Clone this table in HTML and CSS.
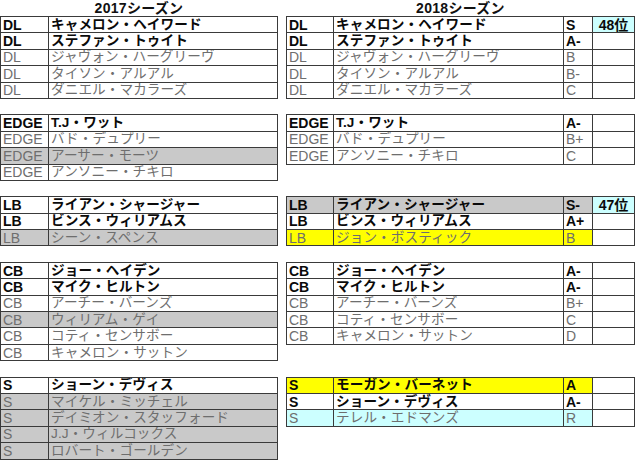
FILE: index.html
```html
<!DOCTYPE html>
<html lang="ja">
<head>
<meta charset="utf-8">
<title>2017 / 2018 シーズン</title>
<link rel="stylesheet" href="styles.css">
</head>
<body>
<div class="sheet">
  <div class="heads">
    <div class="head head-left">2017シーズン</div>
    <div class="head head-right">2018シーズン</div>
  </div>

  <div class="group">
    <table class="tbl left">
      <colgroup><col class="c-pos"><col class="c-name"></colgroup>
      <tr class="b"><td>DL</td><td>キャメロン・ヘイワード</td></tr>
      <tr class="b"><td>DL</td><td>ステファン・トゥイト</td></tr>
      <tr><td>DL</td><td>ジャヴォン・ハーグリーヴ</td></tr>
      <tr><td>DL</td><td>タイソン・アルアル</td></tr>
      <tr><td>DL</td><td>ダニエル・マカラーズ</td></tr>
    </table>
    <table class="tbl right">
      <colgroup><col class="r-pos"><col class="r-name"><col class="r-grade"><col class="r-rank"></colgroup>
      <tr class="b"><td>DL</td><td>キャメロン・ヘイワード</td><td>S</td><td class="rank">48位</td></tr>
      <tr class="b"><td>DL</td><td>ステファン・トゥイト</td><td>A-</td><td></td></tr>
      <tr><td>DL</td><td>ジャヴォン・ハーグリーヴ</td><td>B</td><td></td></tr>
      <tr><td>DL</td><td>タイソン・アルアル</td><td>B-</td><td></td></tr>
      <tr><td>DL</td><td>ダニエル・マカラーズ</td><td>C</td><td></td></tr>
    </table>
  </div>

  <div class="group">
    <table class="tbl left">
      <colgroup><col class="c-pos"><col class="c-name"></colgroup>
      <tr class="b"><td>EDGE</td><td>T.J・ワット</td></tr>
      <tr><td>EDGE</td><td>バド・デュプリー</td></tr>
      <tr class="gray"><td>EDGE</td><td>アーサー・モーツ</td></tr>
      <tr><td>EDGE</td><td>アンソニー・チキロ</td></tr>
    </table>
    <table class="tbl right">
      <colgroup><col class="r-pos"><col class="r-name"><col class="r-grade"><col class="r-rank"></colgroup>
      <tr class="b"><td>EDGE</td><td>T.J・ワット</td><td>A-</td><td></td></tr>
      <tr><td>EDGE</td><td>バド・デュプリー</td><td>B+</td><td></td></tr>
      <tr><td>EDGE</td><td>アンソニー・チキロ</td><td>C</td><td></td></tr>
    </table>
  </div>

  <div class="group">
    <table class="tbl left">
      <colgroup><col class="c-pos"><col class="c-name"></colgroup>
      <tr class="b"><td>LB</td><td>ライアン・シャージャー</td></tr>
      <tr class="b"><td>LB</td><td>ビンス・ウィリアムス</td></tr>
      <tr class="gray"><td>LB</td><td>シーン・スペンス</td></tr>
    </table>
    <table class="tbl right">
      <colgroup><col class="r-pos"><col class="r-name"><col class="r-grade"><col class="r-rank"></colgroup>
      <tr class="b"><td class="fill-gray">LB</td><td class="fill-gray">ライアン・シャージャー</td><td class="fill-gray">S-</td><td class="rank">47位</td></tr>
      <tr class="b"><td>LB</td><td>ビンス・ウィリアムス</td><td>A+</td><td></td></tr>
      <tr><td class="fill-yellow">LB</td><td class="fill-yellow">ジョン・ボスティック</td><td class="fill-yellow">B</td><td></td></tr>
    </table>
  </div>

  <div class="group">
    <table class="tbl left">
      <colgroup><col class="c-pos"><col class="c-name"></colgroup>
      <tr class="b"><td>CB</td><td>ジョー・ヘイデン</td></tr>
      <tr class="b"><td>CB</td><td>マイク・ヒルトン</td></tr>
      <tr><td>CB</td><td>アーチー・バーンズ</td></tr>
      <tr class="gray"><td>CB</td><td>ウィリアム・ゲイ</td></tr>
      <tr><td>CB</td><td>コティ・センサボー</td></tr>
      <tr><td>CB</td><td>キャメロン・サットン</td></tr>
    </table>
    <table class="tbl right">
      <colgroup><col class="r-pos"><col class="r-name"><col class="r-grade"><col class="r-rank"></colgroup>
      <tr class="b"><td>CB</td><td>ジョー・ヘイデン</td><td>A-</td><td></td></tr>
      <tr class="b"><td>CB</td><td>マイク・ヒルトン</td><td>A-</td><td></td></tr>
      <tr><td>CB</td><td>アーチー・バーンズ</td><td>B+</td><td></td></tr>
      <tr><td>CB</td><td>コティ・センサボー</td><td>C</td><td></td></tr>
      <tr><td>CB</td><td>キャメロン・サットン</td><td>D</td><td></td></tr>
    </table>
  </div>

  <div class="group">
    <table class="tbl left">
      <colgroup><col class="c-pos"><col class="c-name"></colgroup>
      <tr class="b"><td>S</td><td>ショーン・デヴィス</td></tr>
      <tr class="gray"><td>S</td><td>マイケル・ミッチェル</td></tr>
      <tr class="gray"><td>S</td><td>デイミオン・スタッフォード</td></tr>
      <tr class="gray"><td>S</td><td>J.J・ウィルコックス</td></tr>
      <tr class="gray"><td>S</td><td>ロバート・ゴールデン</td></tr>
    </table>
    <table class="tbl right">
      <colgroup><col class="r-pos"><col class="r-name"><col class="r-grade"><col class="r-rank"></colgroup>
      <tr class="b"><td class="fill-yellow">S</td><td class="fill-yellow">モーガン・バーネット</td><td class="fill-yellow">A</td><td></td></tr>
      <tr class="b"><td>S</td><td>ショーン・デヴィス</td><td>A-</td><td></td></tr>
      <tr><td class="fill-cyan">S</td><td class="fill-cyan">テレル・エドマンズ</td><td class="fill-cyan">R</td><td></td></tr>
    </table>
  </div>
</div>
</body>
</html>
```

FILE: styles.css
```css
html, body {
  margin: 0;
  padding: 0;
  background: #ffffff;
}

body {
  font-family: "Liberation Sans", "Noto Sans CJK JP", sans-serif;
  font-size: 14px;
  color: #6e6e6e;
}

.sheet {
  display: flex;
  flex-direction: column;
  width: 640px;
}

.heads {
  display: flex;
  height: 16px;
}

.head {
  font-weight: bold;
  color: #111111;
  text-align: center;
  line-height: 16px;
  font-size: 14px;
  letter-spacing: 0.3px;
}

.head-left {
  width: 278px;
}

.head-right {
  margin-left: 8px;
  width: 349px;
}

.group {
  display: flex;
  align-items: flex-start;
  gap: 8px;
  margin-bottom: 15.4px;
}

.tbl {
  border-collapse: collapse;
  table-layout: fixed;
  flex: none;
}

.tbl.left {
  width: 277px;
}

.tbl.right {
  width: 348px;
}

.c-pos { width: 48px; }
.c-name { width: 229px; }

.r-pos { width: 47px; }
.r-name { width: 230px; }
.r-grade { width: 29px; }
.r-rank { width: 42px; }

.tbl tr {
  height: 16.4px;
}

.tbl td {
  border: 1px solid #3a3a3a;
  padding: 0 2px;
  line-height: 14px;
  height: 15.4px;
  white-space: nowrap;
  overflow: hidden;
  vertical-align: middle;
}

.tbl td:nth-child(2) {
  font-size: 13.6px;
  letter-spacing: 0.1px;
}

.tbl tr.b td {
  font-weight: bold;
  color: #0a0a0a;
}

.tbl tr.gray td,
.tbl td.fill-gray {
  background: #c9c9c9;
}

.tbl td.fill-yellow {
  background: #ffff00;
}

.tbl td.fill-cyan {
  background: #ccffff;
}

.tbl td.rank {
  background: #ccffff;
  text-align: center;
  font-weight: bold;
  color: #0a0a0a;
}
```
